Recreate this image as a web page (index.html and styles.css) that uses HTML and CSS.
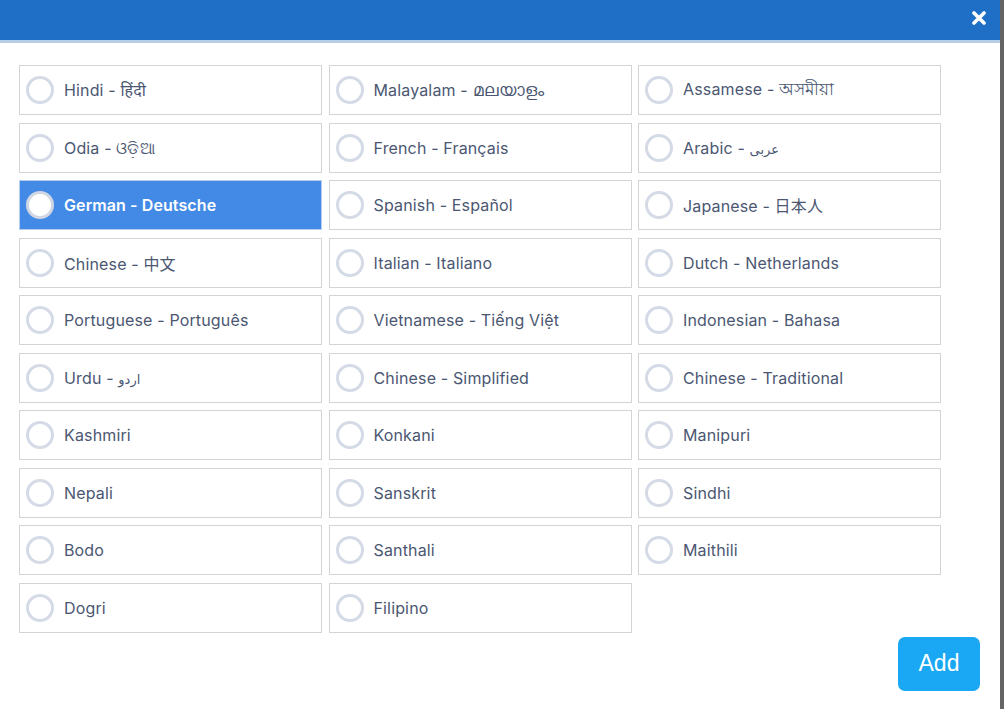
FILE: index.html
```html
<!DOCTYPE html>
<html>
<head>
<meta charset="utf-8">
<link rel="stylesheet" href="styles.css">
</head>
<body>
<div class="page">
  <div class="modal">
    <header class="header">
      <button class="close" aria-label="Close">
        <svg width="14" height="14" viewBox="0 0 14 14"><path d="M2 2 L12 12 M12 2 L2 12" stroke="#fff" stroke-width="3.6" stroke-linecap="round"/></svg>
      </button>
    </header>
    <div class="body">
      <div class="grid">
        <label class="option"><span class="radio"></span><span class="name">Hindi - हिंदी</span></label>
        <label class="option"><span class="radio"></span><span class="name">Malayalam - <span class="ml">മലയാളം</span></span></label>
        <label class="option"><span class="radio"></span><span class="name">Assamese - <span class="bn">অসমীয়া</span></span></label>
        <label class="option"><span class="radio"></span><span class="name">Odia - ଓଡ଼ିଆ</span></label>
        <label class="option"><span class="radio"></span><span class="name">French - Français</span></label>
        <label class="option"><span class="radio"></span><span class="name">Arabic - <span class="ar">عربى</span></span></label>
        <label class="option selected"><span class="radio"></span><span class="name">German - Deutsche</span></label>
        <label class="option"><span class="radio"></span><span class="name">Spanish - Español</span></label>
        <label class="option"><span class="radio"></span><span class="name">Japanese - 日本人</span></label>
        <label class="option"><span class="radio"></span><span class="name">Chinese - 中文</span></label>
        <label class="option"><span class="radio"></span><span class="name">Italian - Italiano</span></label>
        <label class="option"><span class="radio"></span><span class="name">Dutch - Netherlands</span></label>
        <label class="option"><span class="radio"></span><span class="name">Portuguese - Português</span></label>
        <label class="option"><span class="radio"></span><span class="name">Vietnamese - Tiếng Việt</span></label>
        <label class="option"><span class="radio"></span><span class="name">Indonesian - Bahasa</span></label>
        <label class="option"><span class="radio"></span><span class="name">Urdu - <span class="ar">اردو</span></span></label>
        <label class="option"><span class="radio"></span><span class="name">Chinese - Simplified</span></label>
        <label class="option"><span class="radio"></span><span class="name">Chinese - Traditional</span></label>
        <label class="option"><span class="radio"></span><span class="name">Kashmiri</span></label>
        <label class="option"><span class="radio"></span><span class="name">Konkani</span></label>
        <label class="option"><span class="radio"></span><span class="name">Manipuri</span></label>
        <label class="option"><span class="radio"></span><span class="name">Nepali</span></label>
        <label class="option"><span class="radio"></span><span class="name">Sanskrit</span></label>
        <label class="option"><span class="radio"></span><span class="name">Sindhi</span></label>
        <label class="option"><span class="radio"></span><span class="name">Bodo</span></label>
        <label class="option"><span class="radio"></span><span class="name">Santhali</span></label>
        <label class="option"><span class="radio"></span><span class="name">Maithili</span></label>
        <label class="option"><span class="radio"></span><span class="name">Dogri</span></label>
        <label class="option"><span class="radio"></span><span class="name">Filipino</span></label>
      </div>
      <div class="actions">
        <button class="add">Add</button>
      </div>
    </div>
  </div>
  <div class="scrollbar"></div>
</div>
</body>
</html>
```

FILE: styles.css
```css
* { box-sizing: border-box; }
html, body { margin: 0; padding: 0; }
body {
  width: 1004px;
  height: 709px;
  overflow: hidden;
  background: #fff;
  font-family: Inter, "Noto Sans", "Noto Sans CJK JP", sans-serif;
}
.page {
  display: flex;
  height: 709px;
}
.modal {
  flex: 1;
  display: flex;
  flex-direction: column;
}
.scrollbar {
  width: 4px;
  background: #646464;
}
.header {
  height: 43px;
  background: #206fc7;
  border-bottom: 3px solid #b5cde6;
  display: flex;
  justify-content: flex-end;
  align-items: flex-start;
  padding: 11px 14px 0 0;
}
.close {
  border: 0;
  background: none;
  padding: 0;
  width: 14px;
  height: 14px;
  display: flex;
}
.body {
  padding: 22px 20px 0 19px;
  display: flex;
  flex-direction: column;
}
.grid {
  display: grid;
  grid-template-columns: repeat(3, 303px);
  grid-auto-rows: 50px;
  column-gap: 6.5px;
  row-gap: 7.5px;
}
.option {
  display: flex;
  align-items: center;
  border: 1px solid #d4d4d4;
  padding-left: 6px;
  gap: 10px;
  font-size: 16px;
  letter-spacing: 0.15px;
  color: #4b5772;
  background: #fff;
}
.radio {
  width: 28px;
  height: 28px;
  border-radius: 50%;
  border: 3px solid #d4dae6;
  background: #fff;
  flex: none;
}
.name { white-space: nowrap; }
.ar { font-family: "DejaVu Sans", sans-serif; font-size: 13px; letter-spacing: 0; }
.ml, .bn { font-size: 17px; letter-spacing: 0; }
.option.selected {
  background: #428ae6;
  border-color: #b6cdee;
  color: #fff;
  font-weight: 600;
  letter-spacing: 0.1px;
}
.option.selected .radio {
  border-color: #d0d6e2;
}
.actions {
  display: flex;
  justify-content: flex-end;
  margin-top: 4px;
}
.add {
  width: 82px;
  height: 54px;
  border: 0;
  border-radius: 7px;
  background: #1aa8f5;
  color: #fff;
  font-family: "Liberation Sans", Arial, sans-serif;
  font-size: 23px;
  padding: 0;
}
```
